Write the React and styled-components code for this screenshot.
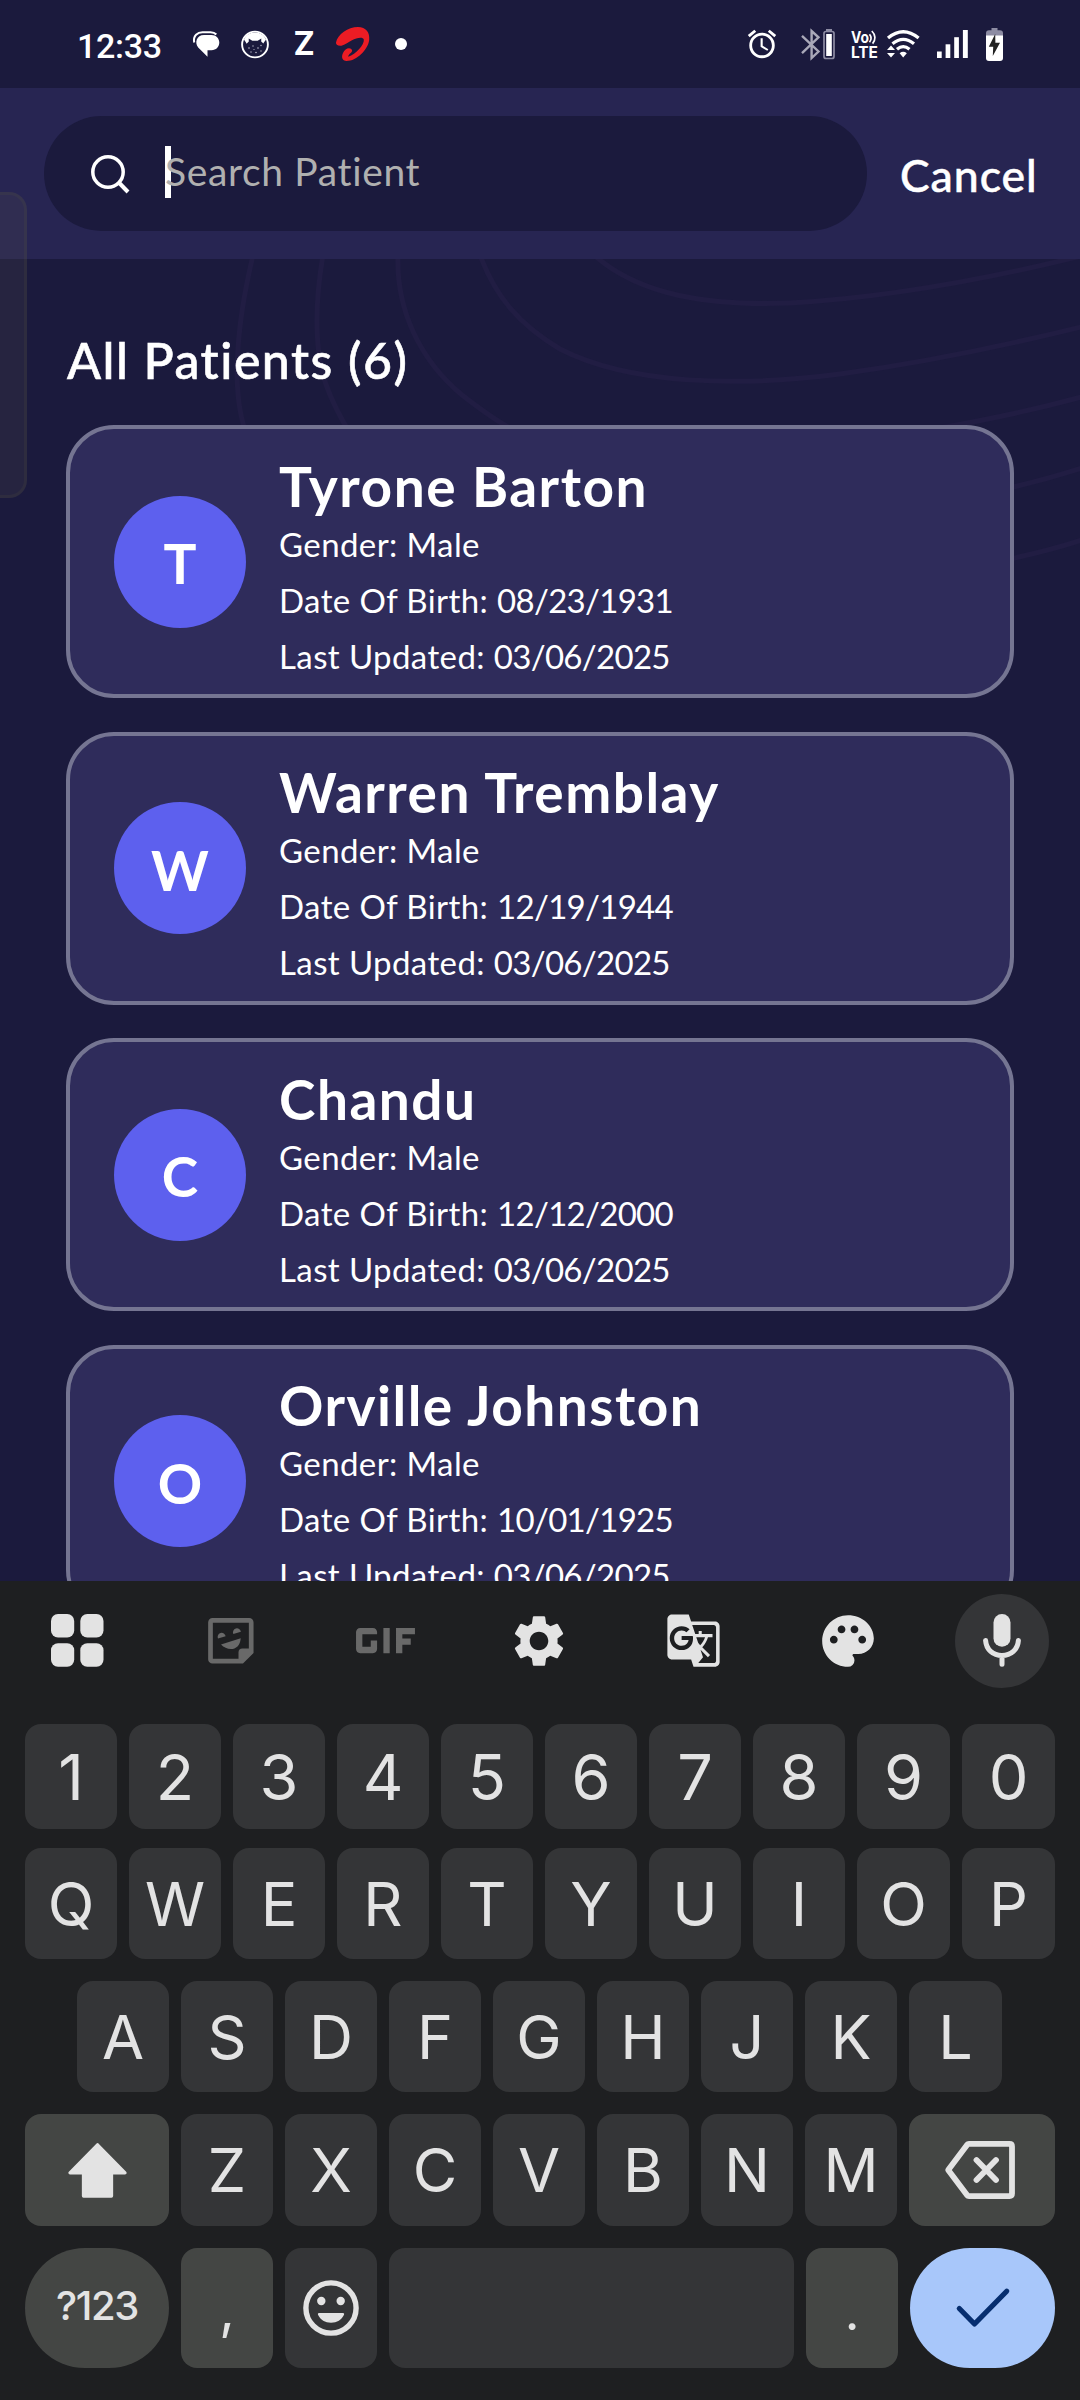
import React from "react";
import styled, { createGlobalStyle, css } from "styled-components";
import { MdAlarm, MdGif, MdGTranslate, MdPalette, MdSettings } from "react-icons/md";

const colors = {
  page: "#1b1a3d",
  header: "#272552",
  card: "#2f2c5b",
  cardBorder: "#757592",
  accent: "#5d60ee",
  keyboard: "#1e1f21",
  key: "#343537",
  keyAlt: "#444644",
  keyText: "#e3e3e3",
  muted: "#696969",
  enter: "#a8c7fa",
  enterMark: "#062e6f",
};

const GlobalStyle = createGlobalStyle`
  * { box-sizing: border-box; }
  body { margin: 0; background: ${colors.page}; }
  svg { display: block; flex: none; overflow: visible; }
`;

const Screen = styled.div`
  position: relative;
  display: flex;
  flex-direction: column;
  width: 1080px;
  height: 2400px;
  overflow: hidden;
  background: ${colors.page};
  color: #fff;
  font-family: Lato, "Open Sans", sans-serif;
`;

/* ---------- status bar ---------- */

const StatusBar = styled.div`
  flex: none;
  display: flex;
  justify-content: space-between;
  align-items: center;
  height: 88px;
  padding: 0 77px;
`;

const StatusGroup = styled.div`
  display: flex;
  align-items: center;
`;

const Clock = styled.span`
  width: 84px;
  padding-top: 3px;
  font: 500 34px/40px Roboto, sans-serif;
  letter-spacing: -0.3px;
  white-space: nowrap;
`;

const StatusItem = styled.span`
  display: flex;
  margin-left: ${(p) => p.$before}px;
`;

const ZMark = styled.span`
  width: 20px;
  display: flex;
  justify-content: center;
  font: 700 32px/40px Inter, sans-serif;
`;

const Dot = styled.span`
  width: 12px;
  height: 12px;
  border-radius: 50%;
  background: #fff;
`;

/* ---------- search header ---------- */

const Header = styled.header`
  flex: none;
  display: flex;
  align-items: center;
  height: 171px;
  padding-left: 44px;
  background: ${colors.header};
`;

const SearchField = styled.div`
  display: flex;
  align-items: center;
  width: 823px;
  height: 115px;
  padding-left: 47px;
  border-radius: 58px;
  background: ${colors.page};
`;

const Caret = styled.span`
  width: 6px;
  height: 52px;
  margin: 0 -6px 3px 36px;
  background: #fff;
`;

const Placeholder = styled.span`
  position: relative;
  padding-bottom: 6px;
  color: #b0b0b0;
  font-size: 39px;
  line-height: 48px;
  letter-spacing: 0.65px;
`;

const CancelButton = styled.button`
  margin-left: 33px;
  padding: 2px 0 0;
  border: 0;
  background: none;
  color: #fff;
  font: 500 44.5px/54px Lato, sans-serif;
  letter-spacing: 0.95px;
  -webkit-text-stroke: 0.5px #fff;
`;

/* ---------- patients ---------- */

const Content = styled.main`
  flex: none;
  position: relative;
  height: 1322px;
  padding: 71px 66px 0;
  overflow: hidden;
`;

const Waves = styled.svg`
  position: absolute;
  top: 0;
  left: 0;
`;

const Title = styled.h1`
  position: relative;
  margin: 0 0 35px 1px;
  font-size: 50px;
  font-weight: 500;
  line-height: 60px;
  letter-spacing: 1.5px;
  -webkit-text-stroke: 0.6px #fff;
`;

const PatientList = styled.div`
  position: relative;
  display: flex;
  flex-direction: column;
  gap: 33.5px;
`;

const Card = styled.article`
  flex: none;
  display: flex;
  align-items: center;
  gap: 33px;
  width: 948px;
  height: 273px;
  padding: 0 44px;
  border: 4px solid ${colors.cardBorder};
  border-radius: 48px;
  background: ${colors.card};
`;

const Avatar = styled.div`
  flex: none;
  display: flex;
  align-items: center;
  justify-content: center;
  width: 132px;
  height: 132px;
  padding-top: 3px;
  border-radius: 50%;
  background: ${colors.accent};
  font-size: 55px;
  font-weight: 700;
  line-height: 66px;
`;

const PatientInfo = styled.div`
  padding-top: 16px;
`;

const PatientName = styled.h2`
  margin: 0;
  font-size: 55px;
  font-weight: 700;
  line-height: 60px;
  letter-spacing: 1.5px;
`;

const PatientLine = styled.p`
  margin: 0;
  font-size: 33px;
  line-height: 56px;
  letter-spacing: 0.4px;
`;

const DateValue = styled.span`
  letter-spacing: -0.7px;
`;

const EdgePanel = styled.div`
  position: absolute;
  top: 192px;
  left: 0;
  width: 27px;
  height: 306px;
  border: 3px solid rgba(86, 86, 60, 0.16);
  border-left: 0;
  border-radius: 0 18px 18px 0;
  background: rgba(86, 82, 80, 0.2);
`;

/* ---------- keyboard ---------- */

const Keyboard = styled.section`
  flex: 1;
  background: ${colors.keyboard};
  color: ${colors.keyText};
`;

const Tools = styled.div`
  display: grid;
  grid-template-columns: repeat(7, 1fr);
  place-items: center;
  height: 119px;
  margin-bottom: 24px;
  padding-right: 1px;
`;

const Tool = styled.span`
  display: flex;
  color: ${(p) => (p.$muted ? colors.muted : colors.keyText)};
`;

const MicButton = styled.span`
  display: flex;
  align-items: center;
  justify-content: center;
  width: 94px;
  height: 94px;
  border-radius: 50%;
  background: ${colors.key};
`;

const KeyRow = styled.div`
  display: flex;
  gap: 12px;
  height: ${(p) => p.$height}px;
  margin-bottom: ${(p) => p.$after || 0}px;
  padding: 0 ${(p) => (p.$inset ? "78px 0 77px" : "25px")};
`;

const Key = styled.div`
  flex: ${(p) => (p.$width ? `0 0 ${p.$width}px` : "1 1 0")};
  display: flex;
  align-items: center;
  justify-content: center;
  border-radius: 16px;
  background: ${(p) => (p.$alt ? colors.keyAlt : colors.key)};
  font: 400 61px/74px Inter, sans-serif;
  ${(p) =>
    p.$digit &&
    css`
      font-size: 63px;
    `}
  ${(p) =>
    p.$mode &&
    css`
      border-radius: 60px;
      font-size: 40px;
      font-weight: 500;
      letter-spacing: -1.3px;
      padding-bottom: 4px;
    `}
  ${(p) =>
    p.$punct &&
    css`
      padding-top: 3px;
      font: 400 54px/60px ${p.$punct}, sans-serif;
    `}
  ${(p) =>
    p.$enter &&
    css`
      border-radius: 60px;
      background: ${colors.enter};
    `}
`;

/* ---------- drawings ---------- */

const ChatIcon = () => (
  <svg width="27" height="26" viewBox="0 0 27 26">
    <path d="M1.2 11.5C-.2 4.6 4.800 1.200 9.500 1.200h8c2.500 0 4.500.8 5.800 2.300" fill="none" stroke="#fff" strokeWidth="2" />
    <path d="M11 3.900h7.500c4.600 0 7.800 3.300 7.800 7.700s-3.200 7.700-7.800 7.700h-4v6.500L5.200 16.500C1.300 11.500 3.600 3.900 11 3.900z" fill="#fff" />
  </svg>
);

const CatIcon = () => (
  <svg width="28" height="29" viewBox="0 0 28 29">
    <circle cx="14" cy="14.500" r="12.900" fill="none" stroke="#fff" strokeWidth="1.900" />
    <path d="M14 2.500c5.500 0 9.400 3 11 7.200-1.200 1.600-2 2.200-2.600 3.900l-2.200-2.200.1-2.900-3.600 2.200h-5.400L7.700 8.500l.1 2.900-2.200 2.400C5 12 4.200 11.300 3 9.700 4.600 5.500 8.500 2.500 14 2.500z" fill="#fff" />
    <g fill="#b9b9c8">
      <circle cx="8" cy="18" r=".8" /><circle cx="12" cy="16" r=".7" /><circle cx="17" cy="18" r=".8" />
      <circle cx="20" cy="15.500" r=".7" /><circle cx="10" cy="22" r=".7" /><circle cx="15" cy="22.500" r=".8" />
      <circle cx="20" cy="21" r=".7" /><circle cx="13" cy="19.500" r=".6" />
    </g>
  </svg>
);

const SwirlIcon = () => (
  <svg width="34" height="34" viewBox="0 0 34 34">
    <path
      d="M0 15.500C1.500 7.500 12 0 22 0c8 0 12 5.500 11.200 13C32 22.500 21 34 10.500 34 6.300 34 5 30 7 26c2-4.600 6.300-5.800 8.700-3.600 2 2.600-3.500 4.200-3.500 7.400C20 27.500 28.600 17.500 27.800 12.600 27 9.300 20.500 10.700 16 13.200 11 16 7.500 18.700 4.200 18.700 1.200 18.700-.2 17.500 0 15.500z"
      fill="#ec1c24"
    />
  </svg>
);

const BluetoothIcon = () => (
  <svg width="20" height="31" viewBox="0 0 20 31" fill="none" stroke="#a9a8b8" strokeWidth="2.400">
    <path d="M1 6.800 17.500 22.500 10.600 29V2l6.900 6.300L1 24.200" />
  </svg>
);

const SmallBatteryIcon = () => (
  <svg width="12" height="31" viewBox="0 0 12 31">
    <rect x="3" y="0" width="6" height="2" fill="#8d8ca3" />
    <rect x="1" y="2.500" width="10" height="27" rx="2" fill="none" stroke="#8d8ca3" strokeWidth="1.700" />
    <rect x="3.200" y="5" width="5.600" height="22" fill="#fff" />
  </svg>
);

const VolteIcon = () => (
  <svg width="27" height="38" viewBox="0 -5 27 38" fill="#fff">
    <g fontFamily="Inter, sans-serif" fontWeight="700" fontSize="16">
      <text x="0" y="12.800" textLength="18" lengthAdjust="spacingAndGlyphs">Vo</text>
      <text x="0" y="27.500" textLength="27" lengthAdjust="spacingAndGlyphs">LTE</text>
    </g>
    <g fill="none" stroke="#fff" strokeWidth="1.700">
      <path d="M18.500 4.200c2 2.400 2 5.400 0 8" />
      <path d="M20.800 1c4 3.800 4 9 .8 12.600" />
    </g>
  </svg>
);

const WifiIcon = () => (
  <svg width="33" height="28" viewBox="0 0 33 28">
    <g fill="none" stroke="#fff" strokeWidth="3.300">
      <path d="M1 8Q16.200-4.600 31.600 8" />
      <path d="M5.500 13.800Q16.200 5 27 13.800" />
      <path d="M10 19.200Q16.200 14 22.500 19.200" />
    </g>
    <path d="M12.600 23.200Q16.200 20.500 19.800 23.200L16.200 27.500z" fill="#fff" />
    <path d="M4 15.500 8 20H0zM4 27.500 0 23h8z" fill="#fff" stroke={colors.page} strokeWidth="1" paintOrder="stroke" />
  </svg>
);

const SignalIcon = () => (
  <svg width="31" height="28" viewBox="0 0 31 28" fill="#fff">
    <rect x="0" y="21.500" width="4.700" height="6.500" />
    <rect x="8.600" y="14.300" width="4.700" height="13.700" />
    <rect x="17.200" y="7.200" width="4.700" height="20.800" />
    <rect x="25.900" y="0" width="4.900" height="28" />
  </svg>
);

const BatteryIcon = () => (
  <svg width="17" height="33" viewBox="0 0 17 33">
    <path d="M5.500 0h6v2.200h2.500a3 3 0 0 1 3 3V9H0V5.200a3 3 0 0 1 3-3h2.500z" fill="#8d8ca3" />
    <path d="M0 7.500h17V30a3 3 0 0 1-3 3H3a3 3 0 0 1-3-3z" fill="#fff" />
    <path d="M9.200 6 2.800 18.700h4.400L6.800 28 14 14.800H9.400z" fill="#222" />
  </svg>
);

const SearchIcon = () => (
  <svg width="38" height="38" viewBox="0 0 38 38" fill="none" stroke="#fff" strokeWidth="3.500">
    <circle cx="17" cy="17" r="15.200" />
    <path d="M27.800 27.500 37 37" strokeWidth="4" />
  </svg>
);

const AppsIcon = () => (
  <svg width="53" height="53" viewBox="0 0 53 53" fill="currentColor">
    <rect x="0" y="0" width="23.200" height="23.500" rx="7" />
    <rect x="29.300" y="0" width="23.200" height="23.500" rx="7" />
    <rect x="0" y="29.300" width="23.200" height="23.500" rx="7" />
    <rect x="29.300" y="29.300" width="23.200" height="23.500" rx="7" />
  </svg>
);

const StickerIcon = () => (
  <svg width="46" height="46" viewBox="0 0 46 46" fill="currentColor">
    <path d="M4.500 2.400h36.700a2 2 0 0 1 2 2V34L34 43.200H4.500a2 2 0 0 1-2-2V4.400a2 2 0 0 1 2-2z" fill="none" stroke="currentColor" strokeWidth="4.700" />
    <path d="M30.500 42v-7.500a4 4 0 0 1 4-4H42v4L34.500 42z" />
    <path d="M10 20.500a4 4 0 1 1 7.600-2.200z" />
    <path d="M25.300 16a4 4 0 1 1 7.600-2.200z" />
    <path d="M13 26.500 32.700 20.200C32 33 19.500 33.500 13 26.500z" />
  </svg>
);

const MicIcon = () => (
  <svg width="38" height="53" viewBox="0 0 38 53">
    <rect x="10.500" y="0" width="17" height="32.800" rx="8.500" fill={colors.keyText} />
    <path d="M2.600 26.500C3.200 35.500 10 41.500 19 41.500s15.800-6 16.400-15M19 42v8.300" fill="none" stroke={colors.keyText} strokeWidth="5" strokeLinecap="round" />
  </svg>
);

const ShiftIcon = () => (
  <svg width="59" height="55" viewBox="0 0 59 55">
    <path d="M29.500 1.800 57 29.800H43.500V53H15.500V29.800H2z" fill={colors.keyText} stroke={colors.keyText} strokeWidth="3.300" strokeLinejoin="round" />
  </svg>
);

const BackspaceIcon = () => (
  <svg width="74" height="58" viewBox="0 0 74 58" fill="none" stroke={colors.keyText} strokeLinejoin="round" strokeLinecap="round">
    <path d="M3.200 29 22 3.900q.8-1 2-1h40.500q2.500 0 2.500 2.500v47.200q0 2.500-2.500 2.500H24q-1.200 0-2-1z" strokeWidth="5.800" />
    <path d="M31.500 19 51 39M51 19 31.500 39" strokeWidth="5.800" />
  </svg>
);

const EmojiIcon = () => (
  <svg width="56" height="56" viewBox="0 0 56 56">
    <circle cx="28" cy="28" r="25.100" fill="none" stroke={colors.keyText} strokeWidth="5.400" />
    <circle cx="18.300" cy="21" r="4.200" fill={colors.keyText} />
    <circle cx="37.700" cy="21" r="4.200" fill={colors.keyText} />
    <path d="M16 33h24a1.300 1.300 0 0 1 1 1.800C38.500 40 34 42.800 28 42.800S17.500 40 15 34.800A1.300 1.300 0 0 1 16 33z" fill={colors.keyText} />
  </svg>
);

const CheckIcon = () => (
  <svg width="54" height="40" viewBox="0 0 54 40">
    <path d="M3.300 20.500 18.500 36 50.700 3.200" fill="none" stroke={colors.enterMark} strokeWidth="5.200" strokeLinecap="round" strokeLinejoin="round" />
  </svg>
);

const BackgroundWaves = () => (
  <Waves width="1080" height="320" viewBox="0 259 1080 320" fill="none" stroke="#211d43" strokeWidth="5">
    <path d="M253 255C245 290 238 325 237 370C237 395 240 415 245 430" />
    <path d="M323 255C317 290 315 330 320 362C324 385 335 408 348 430" />
    <path d="M398 255C396 310 420 360 462 395C480 409 495 420 510 428" />
    <path d="M480 255C496 298 520 325 560 349C630 385 740 387 840 374C920 363 1000 347 1085 326" />
    <path d="M594 255C640 296 710 306 790 303C880 298 980 281 1085 255" />
    <path d="M940 428Q1020 414 1085 396" />
    <path d="M1000 490Q1045 480 1085 467" />
    <path d="M1000 561Q1045 552 1085 539" />
  </Waves>
);

/* ---------- data ---------- */

const patients = [
  { name: "Tyrone Barton", gender: "Male", dob: "08/23/1931", updated: "03/06/2025" },
  { name: "Warren Tremblay", gender: "Male", dob: "12/19/1944", updated: "03/06/2025" },
  { name: "Chandu", gender: "Male", dob: "12/12/2000", updated: "03/06/2025" },
  { name: "Orville Johnston", gender: "Male", dob: "10/01/1925", updated: "03/06/2025" },
];

const PatientCard = ({ name, gender, dob, updated }) => (
  <Card>
    <Avatar>{name[0]}</Avatar>
    <PatientInfo>
      <PatientName>{name}</PatientName>
      <PatientLine>Gender: {gender}</PatientLine>
      <PatientLine>Date Of Birth: <DateValue>{dob}</DateValue></PatientLine>
      <PatientLine>Last Updated: <DateValue>{updated}</DateValue></PatientLine>
    </PatientInfo>
  </Card>
);

export default function App() {
  return (
    <Screen>
      <GlobalStyle />
      <StatusBar>
        <StatusGroup>
          <Clock>12:33</Clock>
          <StatusItem $before={32}><ChatIcon /></StatusItem>
          <StatusItem $before={21}><CatIcon /></StatusItem>
          <StatusItem $before={25}><ZMark>Z</ZMark></StatusItem>
          <StatusItem $before={22}><SwirlIcon /></StatusItem>
          <StatusItem $before={25}><Dot /></StatusItem>
        </StatusGroup>
        <StatusGroup>
          <MdAlarm size={34} />
          <StatusItem $before={22}><BluetoothIcon /></StatusItem>
          <StatusItem $before={2}><SmallBatteryIcon /></StatusItem>
          <StatusItem $before={16}><VolteIcon /></StatusItem>
          <StatusItem $before={9}><WifiIcon /></StatusItem>
          <StatusItem $before={17}><SignalIcon /></StatusItem>
          <StatusItem $before={18}><BatteryIcon /></StatusItem>
        </StatusGroup>
      </StatusBar>

      <Header>
        <SearchField>
          <SearchIcon />
          <Caret />
          <Placeholder>Search Patient</Placeholder>
        </SearchField>
        <CancelButton>Cancel</CancelButton>
      </Header>

      <Content>
        <BackgroundWaves />
        <Title>All Patients (6)</Title>
        <PatientList>
          {patients.map((p) => (
            <PatientCard key={p.name} {...p} />
          ))}
        </PatientList>
      </Content>

      <Keyboard>
        <Tools>
          <Tool><AppsIcon /></Tool>
          <Tool $muted><StickerIcon /></Tool>
          <Tool $muted><MdGif size={101} /></Tool>
          <Tool><MdSettings size={62} /></Tool>
          <Tool><MdGTranslate size={57} /></Tool>
          <Tool><MdPalette size={62} /></Tool>
          <MicButton><MicIcon /></MicButton>
        </Tools>
        <KeyRow $height={105} $after={19}>
          {[..."1234567890"].map((k, i) => <Key key={k} $digit $width={i < 8 ? 92 : 93}>{k}</Key>)}
        </KeyRow>
        <KeyRow $height={111} $after={22}>
          {[..."QWERTYUIOP"].map((k, i) => <Key key={k} $width={i < 8 ? 92 : 93}>{k}</Key>)}
        </KeyRow>
        <KeyRow $height={111} $after={22} $inset>
          {[..."ASDFGHJKL"].map((k, i) => <Key key={k} $width={i < 8 ? 92 : 93}>{k}</Key>)}
        </KeyRow>
        <KeyRow $height={112} $after={22}>
          <Key $alt $width={144}><ShiftIcon /></Key>
          {[..."ZXCVBNM"].map((k) => <Key key={k} $width={92}>{k}</Key>)}
          <Key $alt><BackspaceIcon /></Key>
        </KeyRow>
        <KeyRow $height={120}>
          <Key $alt $mode $width={144}>?123</Key>
          <Key $alt $punct="Inter" $width={92}>,</Key>
          <Key $width={92}><EmojiIcon /></Key>
          <Key />
          <Key $alt $punct="Lato" $width={92}>.</Key>
          <Key $enter $width={145}><CheckIcon /></Key>
        </KeyRow>
      </Keyboard>

      <EdgePanel />
    </Screen>
  );
}
